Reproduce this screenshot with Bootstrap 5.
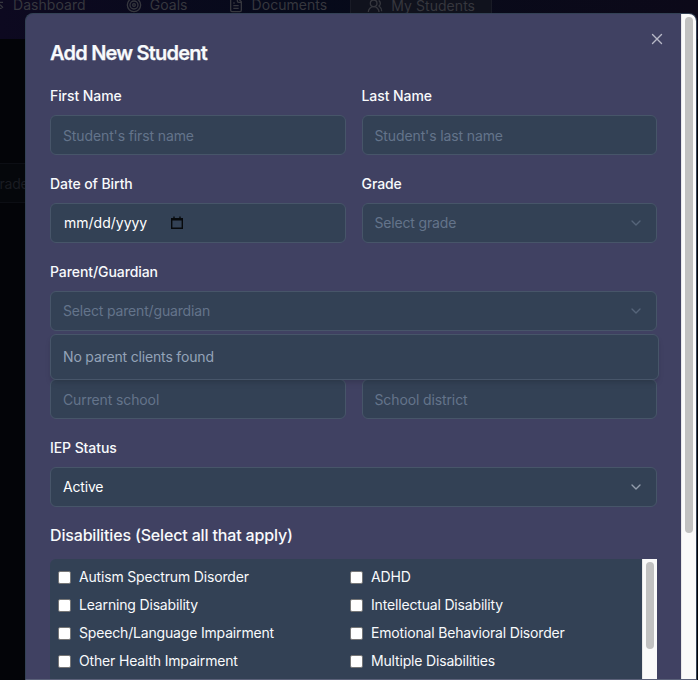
<!DOCTYPE html>
<html lang="en">
<head>
<meta charset="utf-8">
<meta name="viewport" content="width=device-width, initial-scale=1">
<title>Add New Student</title>
<link href="https://cdn.jsdelivr.net/npm/bootstrap@5.3.0/dist/css/bootstrap.min.css" rel="stylesheet">
<style>
html, body { height: 680px; overflow: hidden; }
body { font-family: Inter, "Liberation Sans", sans-serif; font-size: 14px; line-height: 20px; letter-spacing: -.17px; background: #030408; color: #f8fafc; }
.topbar { height: 39px; background: linear-gradient(90deg, #0d0920, #060a1a 45%, #0c0919); color: #36373e; font-size: 14px; }
.tab { height: 20px; margin-top: -5px; gap: 8px; letter-spacing: .05px; }
.tab svg { width: 16px; height: 16px; flex: none; }
.tab-on { width: 142px; height: 28px; background: #10121d; border: 1px solid #191b26; padding-left: 16px; margin-top: -8px; }
.filter { margin-top: 124px; height: 40px; width: 120px; border: 1px solid #0c0e14; border-left: 0; background: #05070b; color: #1a1c22; line-height: 40px; text-indent: -9px; }
.dialog { position: absolute; left: 25px; top: 13px; width: 672px; height: 667px; border: 1px solid #334155; border-bottom-color: #5b6179; border-radius: 8px 8px 0 0; background: #404162; overflow: hidden; }
.pane { width: 655px; padding: 25px 24px 0; }
.dlg-title { font-size: 20px; line-height: 28px; font-weight: 600; letter-spacing: -.78px; margin: 0 0 19px; -webkit-text-stroke: .25px; }
.close-x { position: absolute; left: 622px; top: 16px; width: 18px; height: 18px; color: #b7b8c7; }
.fields { display: grid; grid-template-columns: 295.5px 295.5px; column-gap: 16px; }
.lbl { display: block; font-weight: 500; margin-bottom: 9px; line-height: 20px; letter-spacing: -.08px; }
.field { height: 40px; border: 1px solid #475569; border-radius: 6px; background: #334155; padding: 0 12px; margin-bottom: 19px; color: #64748b; }
.field input { width: 100%; background: none; border: 0; outline: 0; padding: 2px 0 0; color: #f8fafc; letter-spacing: -.12px; }
.field input::placeholder { color: #64748b; opacity: 1; }
.chev { width: 16px; height: 16px; color: #56657a; margin-right: .5px; }
.chev-strong { color: #939dac; }
.drop { position: absolute; left: 24px; top: 320px; width: 609px; height: 46px; border: 1px solid #475569; border-radius: 6px; background: #334155; color: #94a3b8; padding: 0 12px; box-shadow: 0 4px 6px -1px #0000001a, 0 2px 4px -2px #0000001a; }
.sub { font-size: 16px; line-height: 24px; font-weight: 500; letter-spacing: -.16px; margin: -3px 0 12px; }
.choices { height: 130px; background: #334155; border-radius: 6px 0 0 0; padding: 8px 8px 0; display: grid; grid-template-columns: 292px 1fr; grid-auto-rows: 28px; }
.choice { gap: 8px; height: 20px; }
.choice input { appearance: none; width: 13px; height: 13px; background: #fff; border: 1px solid #767676; border-radius: 2px; margin: 0; }
.track { width: 15px; background: #fafafa; border-left: 1px solid #e8e8e8; flex: none; padding: 3px 3px 0; }
.thumb { width: 8px; border-radius: 4px; background: #c1c1c1; }
.school { margin-top: 48px; }
.cal { margin-left: 23px; }
.dob { margin-left: 1px; letter-spacing: 0; }
</style>
</head>
<body>
<nav class="topbar d-flex align-items-start">
  <div class="tab d-flex align-items-center" style="margin-left:-11px"><svg viewBox="0 0 24 24" fill="none" stroke="currentColor" stroke-width="2"><path d="M3 12h14M16 8h5M17 12l4 4M15 17h4"/></svg><span>Dashboard</span></div>
  <div class="tab d-flex align-items-center" style="margin-left:40px"><svg viewBox="0 0 24 24" fill="none" stroke="currentColor" stroke-width="2"><circle cx="12" cy="12" r="10"/><circle cx="12" cy="12" r="6"/><circle cx="12" cy="12" r="2"/></svg><span>Goals</span></div>
  <div class="tab d-flex align-items-center" style="margin-left:40px"><svg viewBox="0 0 24 24" fill="none" stroke="currentColor" stroke-width="2"><path d="M15 2H6a2 2 0 0 0-2 2v16a2 2 0 0 0 2 2h12a2 2 0 0 0 2-2V7Z"/><path d="M14 2v4a2 2 0 0 0 2 2h4M10 9H8M16 13H8M16 17H8"/></svg><span>Documents</span></div>
  <div class="tab tab-on d-flex align-items-center" style="margin-left:23px"><svg viewBox="0 0 24 24" fill="none" stroke="currentColor" stroke-width="2"><path d="M18 21a8 8 0 0 0-16 0"/><circle cx="10" cy="8" r="5"/><path d="M22 20c0-3.4-2-6.5-4-8a5 5 0 0 0-.5-8.3"/></svg><span class="text-nowrap">My Students</span></div>
</nav>
<div class="filter">grade</div>

<div class="dialog d-flex" role="dialog" aria-label="Add New Student">
  <div class="pane flex-shrink-0">
    <h2 class="dlg-title">Add New Student</h2>
    <div class="fields">
      <div><label class="lbl">First Name</label><div class="field d-flex align-items-center"><input placeholder="Student's first name"></div></div>
      <div><label class="lbl">Last Name</label><div class="field d-flex align-items-center"><input placeholder="Student's last name"></div></div>
      <div><label class="lbl">Date of Birth</label><div class="field d-flex align-items-center text-white"><span class="dob">mm/dd/yyyy</span><svg class="cal" width="14" height="14" viewBox="0 0 14 14" fill="none" stroke="#07090c" stroke-width="1.4"><path d="M1.7 2.7h10.6v9.6H1.7zM4 .5v2M10 .5v2"/><path d="M1.5 3.3h11" stroke-width="2.4"/></svg></div></div>
      <div><label class="lbl">Grade</label><div class="field d-flex align-items-center justify-content-between"><span>Select grade</span><svg class="chev" viewBox="0 0 24 24" fill="none" stroke="currentColor" stroke-width="2" stroke-linecap="round" stroke-linejoin="round"><path d="m6 9 6 6 6-6"/></svg></div></div>
    </div>
    <label class="lbl">Parent/Guardian</label>
    <div class="field d-flex align-items-center justify-content-between"><span>Select parent/guardian</span><svg class="chev" viewBox="0 0 24 24" fill="none" stroke="currentColor" stroke-width="2" stroke-linecap="round" stroke-linejoin="round"><path d="m6 9 6 6 6-6"/></svg></div>
    <div class="fields school">
      <div class="field d-flex align-items-center"><input placeholder="Current school"></div>
      <div class="field d-flex align-items-center"><input placeholder="School district"></div>
    </div>
    <label class="lbl">IEP Status</label>
    <div class="field d-flex align-items-center justify-content-between text-white"><span>Active</span><svg class="chev chev-strong" viewBox="0 0 24 24" fill="none" stroke="currentColor" stroke-width="2" stroke-linecap="round" stroke-linejoin="round"><path d="m6 9 6 6 6-6"/></svg></div>
    <h3 class="sub">Disabilities (Select all that apply)</h3>
    <div class="d-flex">
      <div class="choices flex-grow-1">
        <label class="choice d-flex align-items-center"><input type="checkbox">Autism Spectrum Disorder</label>
        <label class="choice d-flex align-items-center"><input type="checkbox">ADHD</label>
        <label class="choice d-flex align-items-center"><input type="checkbox">Learning Disability</label>
        <label class="choice d-flex align-items-center"><input type="checkbox">Intellectual Disability</label>
        <label class="choice d-flex align-items-center"><input type="checkbox">Speech/Language Impairment</label>
        <label class="choice d-flex align-items-center"><input type="checkbox">Emotional Behavioral Disorder</label>
        <label class="choice d-flex align-items-center"><input type="checkbox">Other Health Impairment</label>
        <label class="choice d-flex align-items-center"><input type="checkbox">Multiple Disabilities</label>
      </div>
      <div class="track"><div class="thumb" style="height:87px"></div></div>
    </div>
  </div>
  <div class="track"><div class="thumb" style="height:516px"></div></div>
  <svg class="close-x" viewBox="0 0 18 18" fill="none" stroke="currentColor" stroke-width="1.4" stroke-linecap="round"><path d="M4.5 4.5l9 9M13.5 4.5l-9 9"/></svg>
  <div class="drop d-flex align-items-center">No parent clients found</div>
</div>
<script src="https://cdn.jsdelivr.net/npm/bootstrap@5.3.0/dist/js/bootstrap.bundle.min.js"></script>
</body>
</html>
